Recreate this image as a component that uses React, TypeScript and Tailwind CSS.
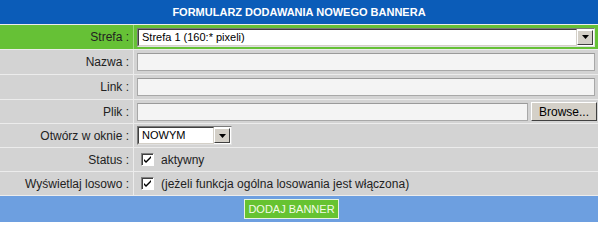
import React from "react";

function Arrow() {
  return (
    <div className="flex h-full w-[16px] items-center justify-center border border-t-[#ffffff] border-l-[#ffffff] border-r-[#404040] border-b-[#404040] bg-[#d4d0c8]">
      <svg width="7" height="4" viewBox="0 0 7 4">
        <path d="M0 0h7L3.5 4z" fill="#000" />
      </svg>
    </div>
  );
}

function Select({ value, w }: { value: string; w: string }) {
  return (
    <div className={`flex h-[19px] ${w} items-stretch border border-t-[#7a7a7a] border-l-[#7a7a7a] border-r-[#e0e0e0] border-b-[#e0e0e0] bg-white`}>
      <div className="flex flex-1 items-center border border-t-[#404040] border-l-[#404040] border-r-[#d4d0c8] border-b-[#d4d0c8] pl-[3px] text-[11px] text-black">
        {value}
      </div>
      <div className="flex items-center bg-white py-px pr-px">
        <Arrow />
      </div>
    </div>
  );
}

function Check() {
  return (
    <div className="flex h-[13px] w-[13px] items-center justify-center border border-t-[#808080] border-l-[#808080] border-r-[#ffffff] border-b-[#ffffff] bg-white shadow-[inset_1px_1px_0_#404040]">
      <svg width="9" height="9" viewBox="0 0 9 9">
        <path d="M1 4l2 2 5-5v2L3 8 1 6z" fill="#000" />
      </svg>
    </div>
  );
}

function Row({
  label,
  children,
  green,
  h,
}: {
  label: string;
  children: React.ReactNode;
  green?: boolean;
  h: string;
}) {
  return (
    <div className={`grid shrink-0 grid-cols-[133px_1fr] border-t border-[#ececec] ${h} ${green ? "bg-[#66c136]" : "bg-[#d3d3d3]"}`}>
      <div className="flex items-center justify-end pr-[4px] text-[12px] text-[#222]">{label}</div>
      <div className={`flex items-center gap-[7px] border-l ${green ? "border-[#9bd67a]" : "border-[#ececec]"} pl-[3px] pr-[3px]`}>
        {children}
      </div>
    </div>
  );
}

function Input({ w }: { w: string }) {
  return <div className={`h-[18px] ${w} border border-[#a8a8a8] border-t-[#9a9a9a] bg-[#f4f4f4]`} />;
}

export default function App() {
  return (
    <div className="flex h-[222px] w-[598px] flex-col overflow-hidden bg-[#6d9fe0] font-['Liberation_Sans',Arial,sans-serif]">
      <div className="flex h-[24px] shrink-0 items-center justify-center bg-[#0b5cb8] text-[11px] font-bold text-white">
        FORMULARZ DODAWANIA NOWEGO BANNERA
      </div>
      <Row label="Strefa :" green h="h-[25px]">
        <Select value="Strefa 1 (160:* pixeli)" w="w-[458px]" />
      </Row>
      <Row label="Nazwa :" h="h-[25px]">
        <Input w="w-[458px]" />
      </Row>
      <Row label="Link :" h="h-[25px]">
        <Input w="w-[458px]" />
      </Row>
      <Row label="Plik :" h="h-[24px]">
        <Input w="w-[391px]" />
        <div className="ml-[-4px] flex h-[19px] w-[66px] items-center justify-center border border-t-[#ffffff] border-l-[#ffffff] border-r-[#404040] border-b-[#404040] bg-[#d4d0c8] text-[12px] text-black">
          Browse...
        </div>
      </Row>
      <Row label="Otwórz w oknie :" h="h-[24px]">
        <Select value="NOWYM" w="w-[95px]" />
      </Row>
      <Row label="Status :" h="h-[24px]">
        <div className="ml-[4px]">
          <Check />
        </div>
        <span className="text-[12px] text-[#222]">aktywny</span>
      </Row>
      <Row label="Wyświetlaj losowo :" h="h-[24px]">
        <div className="ml-[4px]">
          <Check />
        </div>
        <span className="text-[12px] text-[#222]">(jeżeli funkcja ogólna losowania jest włączona)</span>
      </Row>
      <div className="flex flex-1 items-start border-t border-[#ececec] pl-[244px] pt-[3px]">
        <div className="flex h-[20px] w-[95px] items-center justify-center border border-[#e8f4e0] bg-[#66c331] text-[11px] text-[#f4fbe8]">
          DODAJ BANNER
        </div>
      </div>
    </div>
  );
}
